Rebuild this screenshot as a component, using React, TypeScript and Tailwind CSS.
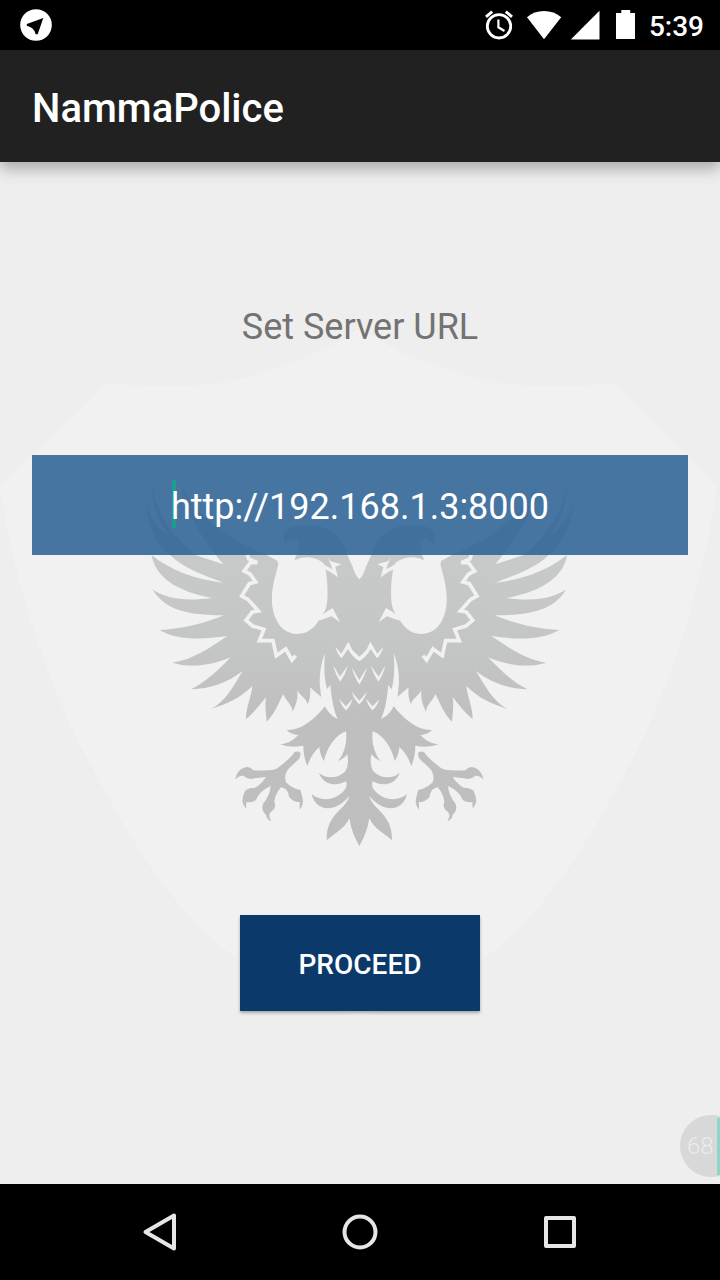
import { useState } from "react";

const SHIELD_FILL = "#f1f1f1";
const MIRROR = "matrix(-1 0 0 1 718.66 0)";

function EagleShape() {
  return (
    <g>
      <path
        transform="translate(140 550) scale(.33333)"
        fill="url(#eagle-upper)"
        d="M664 88 L658 88 Q645 75 638 50 L622 15 C612 -30 570 -80 500 -73 C460 -76 425 -62 432 -33 L436 -18
          C446 -32 462 -36 480 -28 C470 -10 470 5 478 10 Q464 18 465 31 C490 16 530 20 552 42
          C562 70 565 130 561 160 C556 190 544 198 537 210 C518 242 495 252 470 252
          C430 250 402 220 396 160 C394 110 405 85 415 42 L412 32 L380 15
          C330 -5 180 -70 125 -198 C125 -130 190 -30 250 43 L165 15 C100 -40 45 -110 35 -198
          C32 -150 60 -70 90 -40 C60 -60 25 -100 20 -138 C14 -85 60 0 90 15 C130 55 190 75 250 98
          C170 90 90 60 35 15 C45 80 110 125 217 144 C130 155 75 145 37 118
          C75 180 140 196 252 196 C190 222 120 238 58 240 C110 270 180 270 262 258
          C205 296 160 328 97 338 C150 354 210 348 272 322 C235 360 200 395 153 418
          C210 416 260 400 308 363 C280 410 255 455 213 477 C260 462 300 445 337 408
          C334 440 318 470 318 508 C345 485 362 460 378 442 C374 470 378 490 380 515
          C405 490 415 460 430 432 C438 455 455 460 458 485 C470 460 474 445 472 420
          C480 440 498 442 503 463 C511 445 512 430 510 412 L543 440 L560 465
          Q544 488 525 506 L664 506 Z"
      />
      <g transform="translate(220 700) scale(.33333)" fill="url(#eagle-lower)">
        <path
          d="M320 12 C285 60 240 92 200 90 Q212 104 235 105 C215 125 200 131 180 133 Q210 145 250 137
          Q250 170 262 198 Q275 160 298 141 Q300 166 312 183 C320 145 345 105 378 94
          Q384 145 354 184 Q372 176 382 163 Q388 195 376 214 C350 240 315 235 297 218
          C308 252 345 262 378 244 Q382 255 377 265 C350 305 300 305 275 282
          C285 330 340 345 388 288 C378 330 318 340 320 421 C350 395 370 390 388 355
          Q395 400 418 438 L421 430 L422 50 Z"
        />
        <path
          d="M241 158 Q234 152 224 156 C212 175 190 190 172 205 Q160 214 100 211 Q88 197 72 203
          Q51 210 45 239 Q56 226 70 227 Q86 242 103 235 L138 231 Q125 252 105 263
          Q82 264 75 273 Q64 296 69 311 L78 326 L79 306 Q96 309 108 300 Q117 274 152 258
          Q149 288 130 310 Q122 331 138 344 Q139 358 154 364 Q143 347 152 336 Q171 325 163 305
          Q166 281 183 262 Q204 265 207 290 Q222 308 239 306 L239 329 Q252 314 248 298
          Q245 280 241 270 Q218 267 198 247 Q190 222 208 204 L237 177 Q243 168 241 158Z"
        />
      </g>
    </g>
  );
}

function PlumageLines() {
  return (
    <g transform="translate(140 550) scale(.33333)" fill={SHIELD_FILL}>
      <path d="M555 310 Q538 350 539 400 L543 438 Q558 492 593 507 Q577 475 571 405 L561 418 Q549 375 555 310Z" />
      <path d="M535 201 Q560 185 578 174 L600 217 L575 199 Q555 207 532 213Z" />
      <path d="M563 22 L572 34 L604 43 L586 51 L594 82 L570 65 L553 57 L553 44 L577 58 L573 44 Z" />
      <path d="M586 290 L604 311 L625 275 L637 300 L658 320 L659 320 L659 332 L656 332 Q637 321 624 297 L605 325 Q592 312 586 290Z" />
      <path d="M580 346 L600 380 L624 346 Q616 374 601 395 Q586 374 580 346Z" />
      <path d="M635 352 L658 390 L659 390 L659 403 L658 403 Q643 382 635 352Z" />
      <path d="M598 448 L618 469 L638 446 Q632 468 618 481 Q604 468 598 448Z" />
      <path d="M635 425 L658 452 L659 452 L659 463 L658 463 Q643 449 635 425Z" />
      <path
        d="M322 14 L326 27 L352 38 L331 38 L312 63 L330 72 L347 96 L328 101 L305 138 L325 149 L355 183 L337 186 L318 211 L338 228 L372 238 L358 272 L399 272 L409 317 L437 297 L456 330 L467 317"
        fill="none"
        stroke={SHIELD_FILL}
        strokeWidth="11"
        strokeLinejoin="miter"
      />
    </g>
  );
}

function Emblem() {
  return (
    <svg
      className="absolute inset-0 h-full w-full"
      viewBox="0 162 720 1022"
      aria-hidden="true"
    >
      <defs>
        <linearGradient id="eagle-upper" gradientUnits="userSpaceOnUse" x1="0" y1="0" x2="0" y2="590">
          <stop offset="0" stopColor="#c8caca" />
          <stop offset=".5" stopColor="#c4c5c5" />
          <stop offset=".85" stopColor="#bfbfbf" />
        </linearGradient>
        <linearGradient id="eagle-lower" gradientUnits="userSpaceOnUse" x1="0" y1="0" x2="0" y2="450">
          <stop offset="0" stopColor="#bfbfbf" />
          <stop offset="1" stopColor="#bebebe" />
        </linearGradient>
      </defs>
      <path
        fill={SHIELD_FILL}
        d="M360 328 C320 356 255 380 202 385 Q155 388 106 383 C75 417 35 450 0 487
        C15 590 50 690 92 767 Q165 910 239 960 Q290 998 360 1016
        Q430 998 481 960 Q555 910 628 767 C670 690 702 590 717 487
        C685 450 648 417 614 383 Q560 388 518 385 C465 380 400 356 360 328Z"
      />
      <EagleShape />
      <g transform={MIRROR}>
        <EagleShape />
      </g>
      <PlumageLines />
      <g transform={MIRROR}>
        <PlumageLines />
      </g>
    </svg>
  );
}

function StatusBar() {
  return (
    <div className="flex h-[50px] items-center justify-between bg-black pr-4 pl-5 text-white">
      <svg className="size-8" viewBox="0 0 32 32" aria-hidden="true">
        <circle cx="16" cy="16" r="15.8" fill="#fff" />
        <path d="M23.3 9 L17.7 25.3 L15.7 25.2 Q14.5 21 12.2 19.2 Q9.5 17.6 6.8 16.7 L6.8 15 Z" fill="#000" />
      </svg>
      <div className="flex items-center">
        <svg className="h-8 w-[152px]" viewBox="484 9 152 32" fill="#fff" aria-hidden="true">
          <g fill="none" stroke="#fff">
            <circle cx="499" cy="26.3" r="11.7" strokeWidth="2.8" />
            <path d="M486 16.8 L492.2 11.6 M512 16.8 L505.8 11.6" strokeWidth="3" />
            <path d="M498.4 19.5 V27.3 L504.5 31" strokeWidth="2.2" />
          </g>
          <path d="M527 17.2 Q534 11 544 11 Q554 11 561.2 17.2 L544 39.2Z" />
          <path d="M599.5 10.8 V39.5 H570.8Z" />
          <path d="M621.3 10 H630.2 V13 H635 V39 H616 V13 H621.3Z" />
        </svg>
        <time className="ml-[13px] pt-1 text-[28px] leading-8 font-medium">5:39</time>
      </div>
    </div>
  );
}

function NavigationBar() {
  return (
    <nav className="flex h-24 items-center justify-center gap-[152px] bg-black" aria-label="System">
      <button type="button" aria-label="Back" className="size-12">
        <svg viewBox="0 0 48 48" fill="none" stroke="#e6e6e6" strokeWidth="4" strokeLinejoin="round" aria-hidden="true">
          <path d="M38 7.5 V40.5 L9.5 24Z" />
        </svg>
      </button>
      <button type="button" aria-label="Home" className="size-12">
        <svg viewBox="0 0 48 48" fill="none" stroke="#e6e6e6" strokeWidth="4" aria-hidden="true">
          <circle cx="24" cy="24" r="15.5" />
        </svg>
      </button>
      <button type="button" aria-label="Recent apps" className="size-12">
        <svg viewBox="0 0 48 48" fill="none" stroke="#e6e6e6" strokeWidth="4" strokeLinejoin="round" aria-hidden="true">
          <rect x="10" y="10" width="28" height="28" />
        </svg>
      </button>
    </nav>
  );
}

export default function App() {
  const [url, setUrl] = useState("http://192.168.1.3:8000");

  return (
    <div className="flex min-h-screen flex-col bg-[#eeeeee] font-[Roboto,sans-serif]">
      <StatusBar />
      <header className="relative z-10 flex h-28 items-center bg-[#212121] px-8 pt-1.5 shadow-[0_7px_14px_rgba(0,0,0,0.28)]">
        <h1 className="text-[40px] leading-12 font-medium text-white">NammaPolice</h1>
      </header>
      <main className="relative flex flex-1 flex-col overflow-hidden px-8 pt-[141px]">
        <Emblem />
        <form
          className="relative flex flex-col items-center"
          onSubmit={(event) => event.preventDefault()}
        >
          <label htmlFor="server-url" className="text-4xl leading-12 text-[#737373]">
            Set Server URL
          </label>
          <div className="relative mt-26 w-full bg-[#2f6396]/88">
            <span className="pointer-events-none absolute top-[25px] left-1/2 -ml-[188px] h-12 w-1 bg-[#1f9b93]" />
            <input
              id="server-url"
              type="text"
              value={url}
              onChange={(event) => setUrl(event.target.value)}
              className="relative block h-[100px] w-full bg-transparent pt-1 text-center text-4xl text-white caret-[#1f9b93] outline-none"
            />
          </div>
          <button
            type="submit"
            className="mt-90 h-24 w-60 bg-[#0a396a] pt-1 text-[28px] font-medium text-white shadow-[0_2px_3px_rgba(0,0,0,0.3)]"
          >
            PROCEED
          </button>
        </form>
        <div className="absolute -right-[22px] bottom-[7px] flex size-[62px] items-center rounded-full bg-[#d8d8d8] pl-[7px] text-2xl font-light text-[#ebebeb]">
          68
        </div>
        <div className="absolute right-0 bottom-[9px] h-[57px] w-[3px] bg-[#8dd5c6]" />
      </main>
      <NavigationBar />
    </div>
  );
}
